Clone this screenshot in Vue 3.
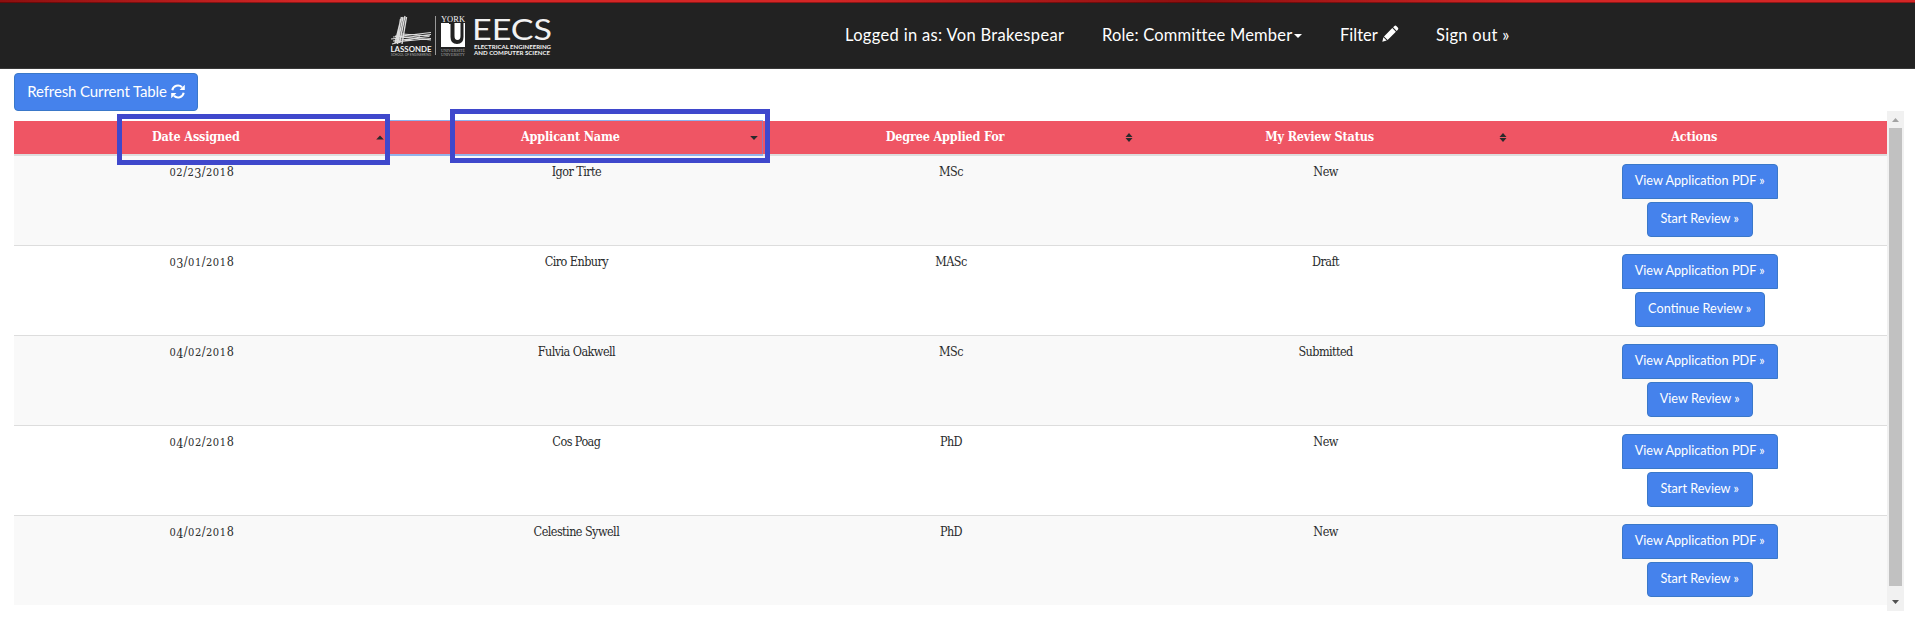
<script setup>
const columns = [
  { label: 'Date Assigned', sort: 'asc' },
  { label: 'Applicant Name', sort: 'desc' },
  { label: 'Degree Applied For', sort: 'both' },
  { label: 'My Review Status', sort: 'both' },
  { label: 'Actions', sort: '' }
]
const rows = [
  { date: '02/23/2018', name: 'Igor Tirte', degree: 'MSc', status: 'New', action: 'Start' },
  { date: '03/01/2018', name: 'Ciro Enbury', degree: 'MASc', status: 'Draft', action: 'Continue' },
  { date: '04/02/2018', name: 'Fulvia Oakwell', degree: 'MSc', status: 'Submitted', action: 'View' },
  { date: '04/02/2018', name: 'Cos Poag', degree: 'PhD', status: 'New', action: 'Start' },
  { date: '04/02/2018', name: 'Celestine Sywell', degree: 'PhD', status: 'New', action: 'Start' }
]
// Old-style numerals: 0-2 sit at x-height, 3-5, 7 and 9 descend, 6 and 8 ascend.
const figure = (c) => ('012'.includes(c) ? 'low' : '34579'.includes(c) ? 'desc' : '')
</script>

<template>
  <div class="page">
    <div class="strip"></div>
    <nav class="navbar">
      <svg class="logo" width="164" height="42" viewBox="0 0 164 42">
        <g stroke="#dcdcdc" fill="none" stroke-width="1.4">
          <path d="M11.500 3 L5 29 M13 3 L7.500 30 M15 2 L9.500 29 M16.500 3 L12 30 M10.500 5 L7 28" />
          <path d="M3 23 L41 18.500 M1 25 L41 20.500 M3 27 L39 22.500 M5 28 L41 24.500 M2 30 L30 23 M5 22 L41 26 M12 20 L40 22" stroke-width="1.100" />
        </g>
        <text x="0.500" y="38" class="lt" font-size="8" font-weight="700" textLength="41" lengthAdjust="spacingAndGlyphs">LASSONDE</text>
        <text x="1" y="41.500" class="lt dim" font-size="3" textLength="40" lengthAdjust="spacingAndGlyphs">SCHOOL OF ENGINEERING</text>
        <rect x="45" y="2" width="1" height="39" fill="#999" />
        <text x="51" y="7.500" class="ls" font-size="8" textLength="24" lengthAdjust="spacingAndGlyphs">YORK</text>
        <path d="M51 9h24v24h-24z" fill="#fff" />
        <path d="M59 9 H64.500 V22 Q64.500 26 67.500 26 Q70.500 26 70.500 22 V9 H73.500 V23 Q73.500 30 67 30 Q60.500 30 60.500 23 V10 H59Z" fill="#222" />
        <text x="51" y="37.500" class="ls dim" font-size="4" textLength="24" lengthAdjust="spacingAndGlyphs">UNIVERSITÉ</text>
        <text x="51" y="41.500" class="ls dim" font-size="4" textLength="24" lengthAdjust="spacingAndGlyphs">UNIVERSITY</text>
        <text x="82" y="26" class="lt eecs" font-size="29.500" textLength="80" lengthAdjust="spacingAndGlyphs">EECS</text>
        <text x="84" y="34.500" class="lt" font-size="6" font-weight="700" textLength="77" lengthAdjust="spacingAndGlyphs">ELECTRICAL ENGINEERING</text>
        <text x="84" y="41" class="lt" font-size="6" font-weight="700" textLength="76" lengthAdjust="spacingAndGlyphs">AND COMPUTER SCIENCE</text>
      </svg>
      <ul class="links">
        <li class="user">Logged in as: Von Brakespear</li>
        <li class="role">Role: Committee Member<i class="caret"></i></li>
        <li class="filter">Filter
          <svg width="17" height="17" viewBox="0 0 17 17" fill="#fff">
            <path d="M12.200 1.200 Q13.400 0 14.600 1.200 L15.800 2.400 Q17 3.600 15.800 4.800 L14.700 5.900 L11.100 2.300Z M10.300 3.100 L13.900 6.700 L5.600 15 L2 11.400Z M1.400 12.300 L4.700 15.600 L.3 16.700Z" />
          </svg>
        </li>
        <li class="out">Sign out »</li>
      </ul>
    </nav>

    <main class="content">
      <button class="btn refresh"><span>Refresh Current Table</span>
        <svg width="14" height="15" viewBox="0 0 14 15">
          <path d="M1.300 6.200 A5.700 5.700 0 0 1 11 3.300 M12.700 8.800 A5.700 5.700 0 0 1 3 11.700" fill="none" stroke="#fff" stroke-width="2" />
          <path d="M13.800 .8 V6 H8.600Z M.2 14.200 V9 H5.400Z" fill="#fff" />
        </svg>
      </button>
      <div class="scroller">
        <table class="grid">
          <thead>
            <tr>
              <th v-for="c in columns" :key="c.label" :class="{ focused: c.sort === 'desc' }">
                {{ c.label }}
                <svg v-if="c.sort" class="sort" width="8" height="9" viewBox="0 0 8 9" fill="#292b2c">
                  <path v-if="c.sort === 'asc'" d="M4 2.500 L7.800 6.500 H.2Z" />
                  <path v-if="c.sort === 'desc'" d="M.2 3 H7.800 L4 7Z" />
                  <path v-if="c.sort === 'both'" d="M4 0 L7.500 4 H.5Z M.5 5 H7.500 L4 9Z" />
                </svg>
              </th>
            </tr>
          </thead>
          <tbody>
            <tr v-for="(r, i) in rows" :key="i">
              <td class="date"><span v-for="(c, k) in r.date" :key="k" :class="figure(c)">{{ c }}</span></td>
              <td class="cell">{{ r.name }}</td>
              <td class="cell">{{ r.degree }}</td>
              <td class="cell">{{ r.status }}</td>
              <td>
                <div class="actions">
                  <button class="btn pdf">View Application PDF »</button>
                  <button class="btn" :class="r.action.toLowerCase()">{{ r.action }} Review »</button>
                </div>
              </td>
            </tr>
          </tbody>
        </table>
        <div class="scrollbar">
          <svg width="17" height="17" viewBox="0 0 17 17"><path d="M5 11 L8.500 7 L12 11Z" fill="#a3a3a3" /></svg>
          <div class="thumb"></div>
          <svg width="17" height="17" viewBox="0 0 17 17"><path d="M5 6 L8.500 10 L12 6Z" fill="#505050" /></svg>
        </div>
      </div>
    </main>
    <div class="mark mark-date"></div>
    <div class="mark mark-name"></div>
  </div>
</template>

<style>
body { margin: 0; background: #fff; overflow: hidden; }
</style>

<style scoped>
.page { position: relative; height: 629px; font-family: "DejaVu Serif Condensed", "DejaVu Serif", serif; color: #292b2c; }
.strip { box-sizing: border-box; height: 3px; border-bottom: 1px solid rgba(40, 0, 0, .4); background: linear-gradient(90deg, #8d0f0f, #d42626 16%, #d42626 43%, #8d0f0f 62.500%, #d42626 80%) border-box; }
.navbar { box-sizing: border-box; height: 66px; background: #222; border-bottom: 1px solid #393939; display: flex; padding-left: 390px; }
.logo { margin-top: 11px; flex: none; overflow: visible; }
.lt { font-family: Lato, sans-serif; fill: #f2f2f2; }
.ls { font-family: "Liberation Serif", serif; fill: #f2f2f2; }
.dim { fill: #aaa; }
.eecs { font-weight: 400; }
.links { list-style: none; margin: 0; padding: 0; display: flex; font: 16.500px/24px Lato, sans-serif; color: #fff; padding-top: 20px; white-space: nowrap; }
.links li { flex: none; box-sizing: border-box; }
.user { margin-left: 291px; width: 257px; letter-spacing: .33px; }
.role { width: 238px; letter-spacing: .19px; }
.caret { display: inline-block; border: 4px solid transparent; border-top-color: #fff; border-bottom: 0; margin-left: 2px; vertical-align: 3px; }
.filter { width: 96px; }
.filter svg { vertical-align: -1px; }
.out { letter-spacing: .3px; }

.content { padding: 4px 11px 0 14px; }
.btn { box-sizing: border-box; display: flex; align-items: center; justify-content: center; background: #4582ec; border: 1px solid #3a78c9; border-radius: 4px; color: #fff; font: 12.700px/18px Lato, sans-serif; padding: 0 0 3px; height: 35px; white-space: nowrap; }
.refresh { width: 184px; height: 38px; font-size: 15px; letter-spacing: -.12px; gap: 4px; padding-bottom: 2px; }
.scroller { display: flex; height: 500px; }
.grid { margin-top: 10px; width: 1873px; height: 484px; table-layout: fixed; border-collapse: separate; border-spacing: 0; text-align: center; font-size: 12.500px; line-height: 18px; }
th { box-sizing: border-box; height: 35px; background: #ef5564; color: #fff; border-bottom: 2px solid #ddd; padding: 0 19px 2px 8px; position: relative; font-size: 12.500px; letter-spacing: -.17px; }
.sort { position: absolute; right: 5px; top: 12px; }
.focused { box-shadow: 0 -1px #8fb2ee, inset -1px 0 #9b77b0; border-bottom-color: #93b3ea; }
td { box-sizing: border-box; height: 90px; padding: 8px 0 0; border-top: 1px solid #ddd; vertical-align: top; }
.cell, .date { padding-top: 7px; padding-left: 1px; }
.cell { letter-spacing: -.55px; }
tr:first-child td { border-top: 0; height: 89px; }
tbody tr:nth-child(odd) { background: #f9f9f9; }
.date { font-size: 12.500px; letter-spacing: .35px; }
.low { font-size: 11px; letter-spacing: .6px; }
.desc { position: relative; top: 2px; }
.actions { display: flex; flex-direction: column; align-items: center; gap: 3px; }
.pdf { width: 156px; border-radius: 4px 4px 0 0; }
.start, .view { width: 106px; }
.continue { width: 130px; }
.scrollbar { width: 17px; background: #f1f1f1; display: flex; flex-direction: column; align-items: center; }
.scrollbar svg { flex: none; }
.thumb { width: 13px; height: 458px; background: #c1c1c1; margin-bottom: 8px; }
.mark { position: absolute; box-sizing: border-box; border: 5px solid #3f48cc; }
.mark-date { left: 117px; top: 114px; width: 273px; height: 51px; box-shadow: inset 0 2px #fff; }
.mark-name { left: 450px; top: 109px; width: 320px; height: 54px; }
</style>
